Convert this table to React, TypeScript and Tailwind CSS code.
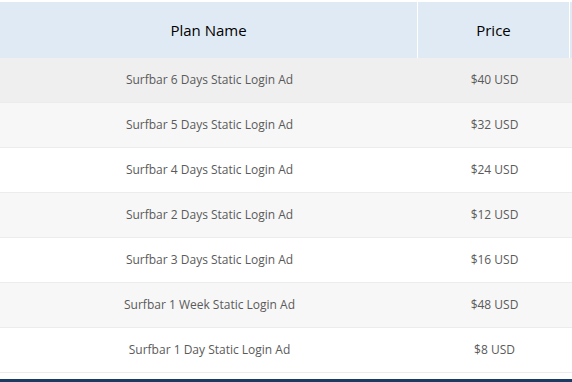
import React from "react";

const rows = [
  ["Surfbar 6 Days Static Login Ad", "$40 USD"],
  ["Surfbar 5 Days Static Login Ad", "$32 USD"],
  ["Surfbar 4 Days Static Login Ad", "$24 USD"],
  ["Surfbar 2 Days Static Login Ad", "$12 USD"],
  ["Surfbar 3 Days Static Login Ad", "$16 USD"],
  ["Surfbar 1 Week Static Login Ad", "$48 USD"],
  ["Surfbar 1 Day Static Login Ad", "$8 USD"],
];

const bgs = ["bg-[#efefef]", "bg-[#f7f7f7]", "bg-white", "bg-[#f7f7f7]", "bg-white", "bg-[#f7f7f7]", "bg-white"];

export default function App() {
  return (
    <div className="w-[572px] h-[382px] bg-white flex flex-col overflow-hidden" style={{ fontFamily: '"Open Sans", sans-serif' }}>
      <div className="pt-[2px]">
        <div className="flex h-[56px] bg-[#e0eaf4] text-[15px] text-black">
          <div className="w-[418px] flex items-center justify-center border-r border-white">Plan Name</div>
          <div className="w-[152px] flex items-center justify-center border-r border-white">Price</div>
          <div className="flex-1" />
        </div>
        {rows.map((r, i) => (
          <div key={i} className={`flex h-[45px] ${bgs[i]} text-[12px] text-[#5a5a5a] border-b border-[#ececec]`}>
            <div className="w-[419px] flex items-center justify-center">{r[0]}</div>
            <div className="w-[151px] flex items-center justify-center">{r[1]}</div>
          </div>
        ))}
      </div>
      <div className="flex-1" />
      <div className="h-[3px] bg-[#1a3b63]" />
    </div>
  );
}
